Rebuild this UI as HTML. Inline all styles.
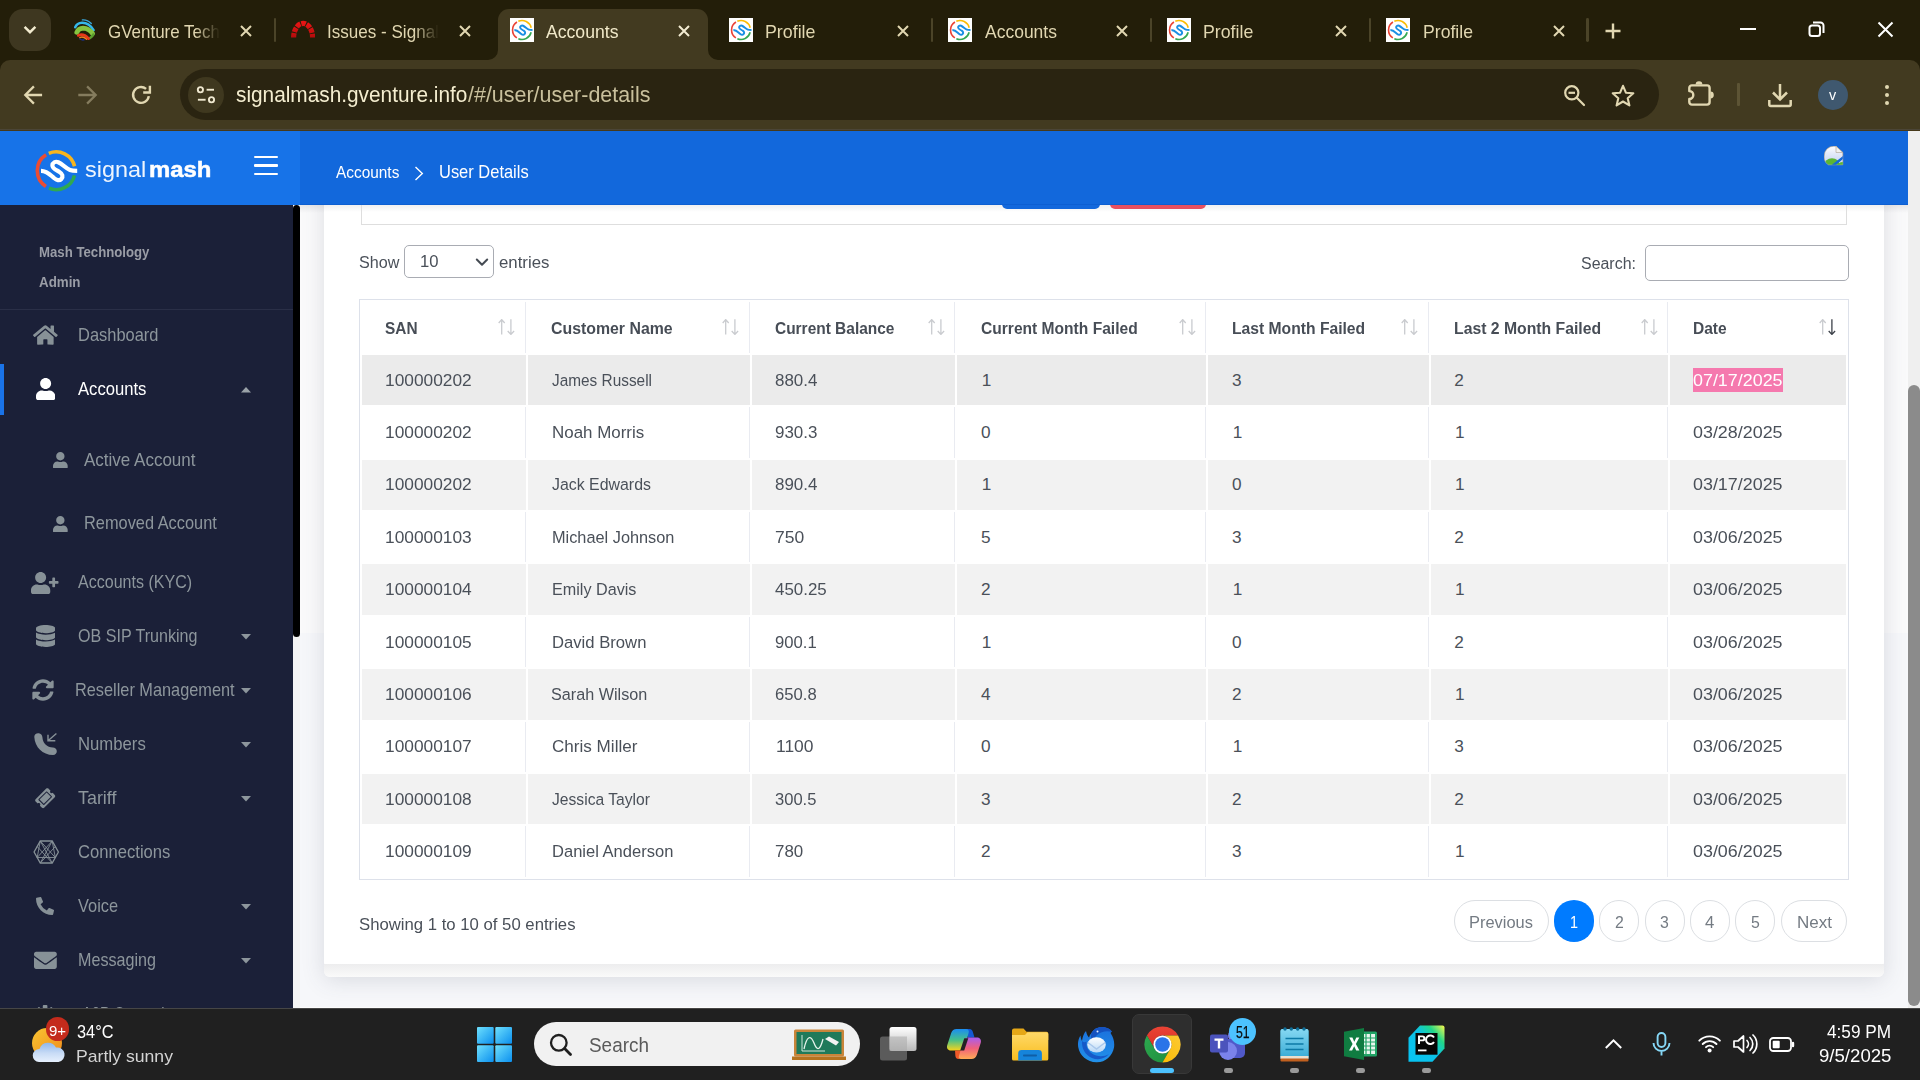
<!DOCTYPE html>
<html><head><meta charset="utf-8"><title>Accounts</title>
<style>
html,body{margin:0;padding:0;background:#fff;}
#s{position:relative;width:1920px;height:1080px;overflow:hidden;font-family:"Liberation Sans",sans-serif;}
.r{position:absolute;display:block;}
.t{position:absolute;white-space:nowrap;line-height:1;transform-origin:0 50%;}
</style></head>
<body><div id="s">
<div class="r" style="left:300px;top:205px;width:1608px;height:428px;background:#fafafb;"></div>
<div class="r" style="left:300px;top:633px;width:1608px;height:375px;background:#f6f7fa;"></div>
<div class="r" style="left:293px;top:1007px;width:1627px;height:1px;background:#fdfdfd;"></div>
<div class="r" style="left:300px;top:205px;width:1608px;height:8px;background:linear-gradient(180deg,rgba(60,60,70,.10),rgba(60,60,70,0));"></div>
<div class="r" style="left:324px;top:150px;width:1560px;height:827px;background:#fafafb;border-radius:0 0 6px 6px;box-shadow:0 3px 22px rgba(70,75,95,.17);"></div>
<div class="r" style="left:324px;top:964px;width:1560px;height:13px;background:linear-gradient(180deg,#ededee,#fafafa);border-radius:0 0 6px 6px;"></div>
<div class="r" style="left:324px;top:205px;width:1560px;height:759px;background:#fff;border-radius:0 0 2px 2px;"></div>
<div class="r" style="left:324px;top:205px;width:1560px;height:7px;background:linear-gradient(180deg,rgba(60,60,70,.08),rgba(60,60,70,0));"></div>
<div class="r" style="left:361px;top:190px;width:1484px;height:33.500px;border:1px solid #dedede;border-top:0;"></div>
<div class="r" style="left:1002px;top:200px;width:98px;height:9px;background:#1368dc;border-radius:0 0 5px 5px;"></div>
<div class="r" style="left:1110px;top:200px;width:96px;height:9px;background:#e8505f;border-radius:0 0 5px 5px;"></div>
<span class="t" style="left:359.00px;top:253.90px;font-size:17.3px;color:#4a5059;transform:scaleX(0.9345);">Show</span>
<div class="r" style="left:404px;top:245px;width:88px;height:30.500px;border:1px solid #a9acb3;border-radius:5px;background:#fff;"></div>
<span class="t" style="left:420.00px;top:253.40px;font-size:17.3px;color:#4a5059;transform:scaleX(0.9634);">10</span>
<svg class="r" style="left:474.5px;top:257.5px;" width="14" height="9" viewBox="0 0 14 9"><path d="M1.800 1.500 L7 6.800 L12.200 1.500" stroke="#454b53" stroke-width="2" fill="none" stroke-linecap="round" stroke-linejoin="round"/></svg>
<span class="t" style="left:498.75px;top:253.90px;font-size:17.3px;color:#4a5059;transform:scaleX(0.9730);">entries</span>
<span class="t" style="left:1581.25px;top:254.65px;font-size:17.3px;color:#4a5059;transform:scaleX(0.9228);">Search:</span>
<div class="r" style="left:1645px;top:245px;width:202px;height:34px;border:1px solid #a9acb3;border-radius:5px;background:#fff;"></div>
<div class="r" style="left:359px;top:299px;width:1487.500px;height:579px;border:1px solid #dde1ea;"></div>
<span class="t" style="left:385.00px;top:320.48px;font-size:17.2px;color:#474d56;font-weight:700;transform:scaleX(0.8955);">SAN</span>
<svg class="r" style="left:498.05px;top:319.2px;" width="17" height="16" viewBox="0 0 17 16"><g fill="none" stroke-width="1.300"><path d="M3.700 15.600 V0.600 M0.700 4 L3.700 0.600 L6.700 4" stroke="#c9cbcf"/><path d="M12.900 0.200 V15.300 M9.700 12 L12.900 15.400 L16.100 12" stroke="#c9cbcf"/></g></svg>
<span class="t" style="left:551.25px;top:320.48px;font-size:17.2px;color:#474d56;font-weight:700;transform:scaleX(0.9229);">Customer Name</span>
<svg class="r" style="left:721.8px;top:319.2px;" width="17" height="16" viewBox="0 0 17 16"><g fill="none" stroke-width="1.300"><path d="M3.700 15.600 V0.600 M0.700 4 L3.700 0.600 L6.700 4" stroke="#c9cbcf"/><path d="M12.900 0.200 V15.300 M9.700 12 L12.900 15.400 L16.100 12" stroke="#c9cbcf"/></g></svg>
<span class="t" style="left:775.00px;top:320.48px;font-size:17.2px;color:#474d56;font-weight:700;transform:scaleX(0.8994);">Current Balance</span>
<svg class="r" style="left:927.55px;top:319.2px;" width="17" height="16" viewBox="0 0 17 16"><g fill="none" stroke-width="1.300"><path d="M3.700 15.600 V0.600 M0.700 4 L3.700 0.600 L6.700 4" stroke="#c9cbcf"/><path d="M12.900 0.200 V15.300 M9.700 12 L12.900 15.400 L16.100 12" stroke="#c9cbcf"/></g></svg>
<span class="t" style="left:980.75px;top:320.48px;font-size:17.2px;color:#474d56;font-weight:700;transform:scaleX(0.9064);">Current Month Failed</span>
<svg class="r" style="left:1178.8px;top:319.2px;" width="17" height="16" viewBox="0 0 17 16"><g fill="none" stroke-width="1.300"><path d="M3.700 15.600 V0.600 M0.700 4 L3.700 0.600 L6.700 4" stroke="#c9cbcf"/><path d="M12.900 0.200 V15.300 M9.700 12 L12.900 15.400 L16.100 12" stroke="#c9cbcf"/></g></svg>
<span class="t" style="left:1231.75px;top:320.48px;font-size:17.2px;color:#474d56;font-weight:700;transform:scaleX(0.9114);">Last Month Failed</span>
<svg class="r" style="left:1401.3px;top:319.2px;" width="17" height="16" viewBox="0 0 17 16"><g fill="none" stroke-width="1.300"><path d="M3.700 15.600 V0.600 M0.700 4 L3.700 0.600 L6.700 4" stroke="#c9cbcf"/><path d="M12.900 0.200 V15.300 M9.700 12 L12.900 15.400 L16.100 12" stroke="#c9cbcf"/></g></svg>
<span class="t" style="left:1454.00px;top:320.48px;font-size:17.2px;color:#474d56;font-weight:700;transform:scaleX(0.9171);">Last 2 Month Failed</span>
<svg class="r" style="left:1640.55px;top:319.2px;" width="17" height="16" viewBox="0 0 17 16"><g fill="none" stroke-width="1.300"><path d="M3.700 15.600 V0.600 M0.700 4 L3.700 0.600 L6.700 4" stroke="#c9cbcf"/><path d="M12.900 0.200 V15.300 M9.700 12 L12.900 15.400 L16.100 12" stroke="#c9cbcf"/></g></svg>
<span class="t" style="left:1693.25px;top:320.48px;font-size:17.2px;color:#474d56;font-weight:700;transform:scaleX(0.9042);">Date</span>
<svg class="r" style="left:1819.3px;top:319.2px;" width="17" height="16" viewBox="0 0 17 16"><g fill="none" stroke-width="1.300"><path d="M3.700 15.600 V0.600 M0.700 4 L3.700 0.600 L6.700 4" stroke="#c9cbcf"/><path d="M12.900 0.200 V15.300 M9.700 12 L12.900 15.400 L16.100 12" stroke="#3d4149"/></g></svg>
<div class="r" style="left:525px;top:302px;width:1px;height:51px;background:#e9ebf1;"></div>
<div class="r" style="left:749px;top:302px;width:1px;height:51px;background:#e9ebf1;"></div>
<div class="r" style="left:954px;top:302px;width:1px;height:51px;background:#e9ebf1;"></div>
<div class="r" style="left:1205px;top:302px;width:1px;height:51px;background:#e9ebf1;"></div>
<div class="r" style="left:1428px;top:302px;width:1px;height:51px;background:#e9ebf1;"></div>
<div class="r" style="left:1667px;top:302px;width:1px;height:51px;background:#e9ebf1;"></div>
<div class="r" style="left:362px;top:355px;width:164px;height:50px;background:#ebebeb;"></div>
<div class="r" style="left:528px;top:355px;width:222px;height:50px;background:#ebebeb;"></div>
<div class="r" style="left:752px;top:355px;width:203px;height:50px;background:#ebebeb;"></div>
<div class="r" style="left:957px;top:355px;width:249px;height:50px;background:#ebebeb;"></div>
<div class="r" style="left:1208px;top:355px;width:221px;height:50px;background:#ebebeb;"></div>
<div class="r" style="left:1431px;top:355px;width:237px;height:50px;background:#ebebeb;"></div>
<div class="r" style="left:1670px;top:355px;width:176px;height:50px;background:#ebebeb;"></div>
<span class="t" style="left:385.00px;top:371.58px;font-size:17.2px;color:#4a5059;transform:scaleX(1.0077);">100000202</span>
<span class="t" style="left:551.50px;top:371.58px;font-size:17.2px;color:#4a5059;transform:scaleX(0.8945);">James Russell</span>
<span class="t" style="left:774.50px;top:371.58px;font-size:17.2px;color:#4a5059;transform:scaleX(0.9864);">880.4</span>
<span class="t" style="left:981.75px;top:371.58px;font-size:17.2px;color:#4a5059;">1</span>
<span class="t" style="left:1231.95px;top:371.58px;font-size:17.2px;color:#4a5059;">3</span>
<span class="t" style="left:1454.20px;top:371.58px;font-size:17.2px;color:#4a5059;">2</span>
<div class="r" style="left:1692.75px;top:368px;width:90.5px;height:24px;background:#f579ae;"></div>
<span class="t" style="left:1693.00px;top:371.58px;font-size:17.2px;color:#fff;transform:scaleX(1.0408);">07/17/2025</span>
<div class="r" style="left:525px;top:407px;width:1px;height:51px;background:#e9ebf1;"></div>
<div class="r" style="left:749px;top:407px;width:1px;height:51px;background:#e9ebf1;"></div>
<div class="r" style="left:954px;top:407px;width:1px;height:51px;background:#e9ebf1;"></div>
<div class="r" style="left:1205px;top:407px;width:1px;height:51px;background:#e9ebf1;"></div>
<div class="r" style="left:1428px;top:407px;width:1px;height:51px;background:#e9ebf1;"></div>
<div class="r" style="left:1667px;top:407px;width:1px;height:51px;background:#e9ebf1;"></div>
<span class="t" style="left:385.00px;top:423.98px;font-size:17.2px;color:#4a5059;transform:scaleX(1.0077);">100000202</span>
<span class="t" style="left:551.50px;top:423.98px;font-size:17.2px;color:#4a5059;transform:scaleX(0.9850);">Noah Morris</span>
<span class="t" style="left:774.50px;top:423.98px;font-size:17.2px;color:#4a5059;transform:scaleX(0.9864);">930.3</span>
<span class="t" style="left:980.95px;top:423.98px;font-size:17.2px;color:#4a5059;">0</span>
<span class="t" style="left:1232.75px;top:423.98px;font-size:17.2px;color:#4a5059;">1</span>
<span class="t" style="left:1455.00px;top:423.98px;font-size:17.2px;color:#4a5059;">1</span>
<span class="t" style="left:1693.00px;top:423.98px;font-size:17.2px;color:#4a5059;transform:scaleX(1.0408);">03/28/2025</span>
<div class="r" style="left:362px;top:460px;width:164px;height:50px;background:#f2f2f2;"></div>
<div class="r" style="left:528px;top:460px;width:222px;height:50px;background:#f2f2f2;"></div>
<div class="r" style="left:752px;top:460px;width:203px;height:50px;background:#f2f2f2;"></div>
<div class="r" style="left:957px;top:460px;width:249px;height:50px;background:#f2f2f2;"></div>
<div class="r" style="left:1208px;top:460px;width:221px;height:50px;background:#f2f2f2;"></div>
<div class="r" style="left:1431px;top:460px;width:237px;height:50px;background:#f2f2f2;"></div>
<div class="r" style="left:1670px;top:460px;width:176px;height:50px;background:#f2f2f2;"></div>
<span class="t" style="left:385.00px;top:476.38px;font-size:17.2px;color:#4a5059;transform:scaleX(1.0077);">100000202</span>
<span class="t" style="left:551.50px;top:476.38px;font-size:17.2px;color:#4a5059;transform:scaleX(0.9246);">Jack Edwards</span>
<span class="t" style="left:774.50px;top:476.38px;font-size:17.2px;color:#4a5059;transform:scaleX(0.9864);">890.4</span>
<span class="t" style="left:981.75px;top:476.38px;font-size:17.2px;color:#4a5059;">1</span>
<span class="t" style="left:1231.95px;top:476.38px;font-size:17.2px;color:#4a5059;">0</span>
<span class="t" style="left:1455.00px;top:476.38px;font-size:17.2px;color:#4a5059;">1</span>
<span class="t" style="left:1693.00px;top:476.38px;font-size:17.2px;color:#4a5059;transform:scaleX(1.0408);">03/17/2025</span>
<div class="r" style="left:525px;top:512px;width:1px;height:50px;background:#e9ebf1;"></div>
<div class="r" style="left:749px;top:512px;width:1px;height:50px;background:#e9ebf1;"></div>
<div class="r" style="left:954px;top:512px;width:1px;height:50px;background:#e9ebf1;"></div>
<div class="r" style="left:1205px;top:512px;width:1px;height:50px;background:#e9ebf1;"></div>
<div class="r" style="left:1428px;top:512px;width:1px;height:50px;background:#e9ebf1;"></div>
<div class="r" style="left:1667px;top:512px;width:1px;height:50px;background:#e9ebf1;"></div>
<span class="t" style="left:385.00px;top:528.78px;font-size:17.2px;color:#4a5059;transform:scaleX(1.0077);">100000103</span>
<span class="t" style="left:551.50px;top:528.78px;font-size:17.2px;color:#4a5059;transform:scaleX(0.9490);">Michael Johnson</span>
<span class="t" style="left:774.50px;top:528.78px;font-size:17.2px;color:#4a5059;transform:scaleX(1.0183);">750</span>
<span class="t" style="left:980.95px;top:528.78px;font-size:17.2px;color:#4a5059;">5</span>
<span class="t" style="left:1231.95px;top:528.78px;font-size:17.2px;color:#4a5059;">3</span>
<span class="t" style="left:1454.20px;top:528.78px;font-size:17.2px;color:#4a5059;">2</span>
<span class="t" style="left:1693.00px;top:528.78px;font-size:17.2px;color:#4a5059;transform:scaleX(1.0408);">03/06/2025</span>
<div class="r" style="left:362px;top:564px;width:164px;height:51px;background:#f2f2f2;"></div>
<div class="r" style="left:528px;top:564px;width:222px;height:51px;background:#f2f2f2;"></div>
<div class="r" style="left:752px;top:564px;width:203px;height:51px;background:#f2f2f2;"></div>
<div class="r" style="left:957px;top:564px;width:249px;height:51px;background:#f2f2f2;"></div>
<div class="r" style="left:1208px;top:564px;width:221px;height:51px;background:#f2f2f2;"></div>
<div class="r" style="left:1431px;top:564px;width:237px;height:51px;background:#f2f2f2;"></div>
<div class="r" style="left:1670px;top:564px;width:176px;height:51px;background:#f2f2f2;"></div>
<span class="t" style="left:385.00px;top:581.18px;font-size:17.2px;color:#4a5059;transform:scaleX(1.0077);">100000104</span>
<span class="t" style="left:551.50px;top:581.18px;font-size:17.2px;color:#4a5059;transform:scaleX(0.9402);">Emily Davis</span>
<span class="t" style="left:774.50px;top:581.18px;font-size:17.2px;color:#4a5059;transform:scaleX(0.9832);">450.25</span>
<span class="t" style="left:980.95px;top:581.18px;font-size:17.2px;color:#4a5059;">2</span>
<span class="t" style="left:1232.75px;top:581.18px;font-size:17.2px;color:#4a5059;">1</span>
<span class="t" style="left:1455.00px;top:581.18px;font-size:17.2px;color:#4a5059;">1</span>
<span class="t" style="left:1693.00px;top:581.18px;font-size:17.2px;color:#4a5059;transform:scaleX(1.0408);">03/06/2025</span>
<div class="r" style="left:525px;top:617px;width:1px;height:50px;background:#e9ebf1;"></div>
<div class="r" style="left:749px;top:617px;width:1px;height:50px;background:#e9ebf1;"></div>
<div class="r" style="left:954px;top:617px;width:1px;height:50px;background:#e9ebf1;"></div>
<div class="r" style="left:1205px;top:617px;width:1px;height:50px;background:#e9ebf1;"></div>
<div class="r" style="left:1428px;top:617px;width:1px;height:50px;background:#e9ebf1;"></div>
<div class="r" style="left:1667px;top:617px;width:1px;height:50px;background:#e9ebf1;"></div>
<span class="t" style="left:385.00px;top:633.58px;font-size:17.2px;color:#4a5059;transform:scaleX(1.0077);">100000105</span>
<span class="t" style="left:551.75px;top:633.58px;font-size:17.2px;color:#4a5059;transform:scaleX(0.9690);">David Brown</span>
<span class="t" style="left:775.00px;top:633.58px;font-size:17.2px;color:#4a5059;transform:scaleX(0.9690);">900.1</span>
<span class="t" style="left:981.75px;top:633.58px;font-size:17.2px;color:#4a5059;">1</span>
<span class="t" style="left:1231.95px;top:633.58px;font-size:17.2px;color:#4a5059;">0</span>
<span class="t" style="left:1454.20px;top:633.58px;font-size:17.2px;color:#4a5059;">2</span>
<span class="t" style="left:1693.00px;top:633.58px;font-size:17.2px;color:#4a5059;transform:scaleX(1.0408);">03/06/2025</span>
<div class="r" style="left:362px;top:669px;width:164px;height:51px;background:#f2f2f2;"></div>
<div class="r" style="left:528px;top:669px;width:222px;height:51px;background:#f2f2f2;"></div>
<div class="r" style="left:752px;top:669px;width:203px;height:51px;background:#f2f2f2;"></div>
<div class="r" style="left:957px;top:669px;width:249px;height:51px;background:#f2f2f2;"></div>
<div class="r" style="left:1208px;top:669px;width:221px;height:51px;background:#f2f2f2;"></div>
<div class="r" style="left:1431px;top:669px;width:237px;height:51px;background:#f2f2f2;"></div>
<div class="r" style="left:1670px;top:669px;width:176px;height:51px;background:#f2f2f2;"></div>
<span class="t" style="left:385.00px;top:685.98px;font-size:17.2px;color:#4a5059;transform:scaleX(1.0077);">100000106</span>
<span class="t" style="left:551.25px;top:685.98px;font-size:17.2px;color:#4a5059;transform:scaleX(0.9413);">Sarah Wilson</span>
<span class="t" style="left:775.00px;top:685.98px;font-size:17.2px;color:#4a5059;transform:scaleX(0.9690);">650.8</span>
<span class="t" style="left:980.95px;top:685.98px;font-size:17.2px;color:#4a5059;">4</span>
<span class="t" style="left:1231.95px;top:685.98px;font-size:17.2px;color:#4a5059;">2</span>
<span class="t" style="left:1455.00px;top:685.98px;font-size:17.2px;color:#4a5059;">1</span>
<span class="t" style="left:1693.00px;top:685.98px;font-size:17.2px;color:#4a5059;transform:scaleX(1.0408);">03/06/2025</span>
<div class="r" style="left:525px;top:722px;width:1px;height:50px;background:#e9ebf1;"></div>
<div class="r" style="left:749px;top:722px;width:1px;height:50px;background:#e9ebf1;"></div>
<div class="r" style="left:954px;top:722px;width:1px;height:50px;background:#e9ebf1;"></div>
<div class="r" style="left:1205px;top:722px;width:1px;height:50px;background:#e9ebf1;"></div>
<div class="r" style="left:1428px;top:722px;width:1px;height:50px;background:#e9ebf1;"></div>
<div class="r" style="left:1667px;top:722px;width:1px;height:50px;background:#e9ebf1;"></div>
<span class="t" style="left:385.00px;top:738.38px;font-size:17.2px;color:#4a5059;transform:scaleX(1.0077);">100000107</span>
<span class="t" style="left:551.50px;top:738.38px;font-size:17.2px;color:#4a5059;transform:scaleX(0.9942);">Chris Miller</span>
<span class="t" style="left:775.75px;top:738.38px;font-size:17.2px;color:#4a5059;transform:scaleX(1.0141);">1100</span>
<span class="t" style="left:980.95px;top:738.38px;font-size:17.2px;color:#4a5059;">0</span>
<span class="t" style="left:1232.75px;top:738.38px;font-size:17.2px;color:#4a5059;">1</span>
<span class="t" style="left:1454.20px;top:738.38px;font-size:17.2px;color:#4a5059;">3</span>
<span class="t" style="left:1693.00px;top:738.38px;font-size:17.2px;color:#4a5059;transform:scaleX(1.0408);">03/06/2025</span>
<div class="r" style="left:362px;top:774px;width:164px;height:50px;background:#f2f2f2;"></div>
<div class="r" style="left:528px;top:774px;width:222px;height:50px;background:#f2f2f2;"></div>
<div class="r" style="left:752px;top:774px;width:203px;height:50px;background:#f2f2f2;"></div>
<div class="r" style="left:957px;top:774px;width:249px;height:50px;background:#f2f2f2;"></div>
<div class="r" style="left:1208px;top:774px;width:221px;height:50px;background:#f2f2f2;"></div>
<div class="r" style="left:1431px;top:774px;width:237px;height:50px;background:#f2f2f2;"></div>
<div class="r" style="left:1670px;top:774px;width:176px;height:50px;background:#f2f2f2;"></div>
<span class="t" style="left:385.00px;top:790.78px;font-size:17.2px;color:#4a5059;transform:scaleX(1.0077);">100000108</span>
<span class="t" style="left:552.00px;top:790.78px;font-size:17.2px;color:#4a5059;transform:scaleX(0.9102);">Jessica Taylor</span>
<span class="t" style="left:775.00px;top:790.78px;font-size:17.2px;color:#4a5059;transform:scaleX(0.9632);">300.5</span>
<span class="t" style="left:980.95px;top:790.78px;font-size:17.2px;color:#4a5059;">3</span>
<span class="t" style="left:1231.95px;top:790.78px;font-size:17.2px;color:#4a5059;">2</span>
<span class="t" style="left:1454.20px;top:790.78px;font-size:17.2px;color:#4a5059;">2</span>
<span class="t" style="left:1693.00px;top:790.78px;font-size:17.2px;color:#4a5059;transform:scaleX(1.0408);">03/06/2025</span>
<div class="r" style="left:525px;top:826px;width:1px;height:51px;background:#e9ebf1;"></div>
<div class="r" style="left:749px;top:826px;width:1px;height:51px;background:#e9ebf1;"></div>
<div class="r" style="left:954px;top:826px;width:1px;height:51px;background:#e9ebf1;"></div>
<div class="r" style="left:1205px;top:826px;width:1px;height:51px;background:#e9ebf1;"></div>
<div class="r" style="left:1428px;top:826px;width:1px;height:51px;background:#e9ebf1;"></div>
<div class="r" style="left:1667px;top:826px;width:1px;height:51px;background:#e9ebf1;"></div>
<span class="t" style="left:385.00px;top:843.18px;font-size:17.2px;color:#4a5059;transform:scaleX(1.0077);">100000109</span>
<span class="t" style="left:551.75px;top:843.18px;font-size:17.2px;color:#4a5059;transform:scaleX(0.9624);">Daniel Anderson</span>
<span class="t" style="left:775.00px;top:843.18px;font-size:17.2px;color:#4a5059;transform:scaleX(0.9835);">780</span>
<span class="t" style="left:980.95px;top:843.18px;font-size:17.2px;color:#4a5059;">2</span>
<span class="t" style="left:1231.95px;top:843.18px;font-size:17.2px;color:#4a5059;">3</span>
<span class="t" style="left:1455.00px;top:843.18px;font-size:17.2px;color:#4a5059;">1</span>
<span class="t" style="left:1693.00px;top:843.18px;font-size:17.2px;color:#4a5059;transform:scaleX(1.0408);">03/06/2025</span>
<span class="t" style="left:359.30px;top:916.10px;font-size:17.3px;color:#4a5059;transform:scaleX(0.9673);">Showing 1 to 10 of 50 entries</span>
<div class="r" style="left:1454px;top:900px;width:92.5px;height:40px;border-radius:21px;border:1px solid #dcdfe3;background:#fff;"></div>
<span class="t" style="left:1469.30px;top:913.78px;font-size:17.2px;color:#747b83;transform:scaleX(0.9565);">Previous</span>
<div class="r" style="left:1554px;top:900px;width:40px;height:42px;border-radius:21px;background:#007bff;"></div>
<span class="t" style="left:1570.00px;top:913.78px;font-size:17.2px;color:#fff;transform:scaleX(0.8380);">1</span>
<div class="r" style="left:1599.3px;top:900px;width:38px;height:40px;border-radius:21px;border:1px solid #dcdfe3;background:#fff;"></div>
<span class="t" style="left:1614.80px;top:913.78px;font-size:17.2px;color:#747b83;transform:scaleX(0.9219);">2</span>
<div class="r" style="left:1644.5px;top:900px;width:38px;height:40px;border-radius:21px;border:1px solid #dcdfe3;background:#fff;"></div>
<span class="t" style="left:1660.00px;top:913.78px;font-size:17.2px;color:#747b83;transform:scaleX(0.9219);">3</span>
<div class="r" style="left:1689.8px;top:900px;width:38px;height:40px;border-radius:21px;border:1px solid #dcdfe3;background:#fff;"></div>
<span class="t" style="left:1705.00px;top:913.78px;font-size:17.2px;color:#747b83;transform:scaleX(0.9742);">4</span>
<div class="r" style="left:1735px;top:900px;width:38px;height:40px;border-radius:21px;border:1px solid #dcdfe3;background:#fff;"></div>
<span class="t" style="left:1750.50px;top:913.78px;font-size:17.2px;color:#747b83;transform:scaleX(0.9219);">5</span>
<div class="r" style="left:1780.5px;top:900px;width:64.3px;height:40px;border-radius:21px;border:1px solid #dcdfe3;background:#fff;"></div>
<span class="t" style="left:1796.60px;top:913.78px;font-size:17.2px;color:#747b83;transform:scaleX(0.9902);">Next</span>
<div class="r" style="left:1908px;top:131px;width:12px;height:877px;background:#efefef;"></div>
<div class="r" style="left:1908px;top:385px;width:12px;height:621px;background:#8b8b8b;border-radius:6px;"></div>
<div class="r" style="left:0px;top:131px;width:300px;height:74px;background:#1773e8;"></div>
<div class="r" style="left:300px;top:131px;width:1608px;height:74px;background:#1268dc;"></div>
<div class="r" style="left:300px;top:204px;width:1608px;height:1px;background:#0d5fd2;"></div>
<svg class="r" style="left:28px;top:140px;" width="60" height="60" viewBox="0 0 60 60"><g fill="none" stroke-width="3.600"><path d="M18.050 14.760 A18.900 18.900 0 0 0 17.910 46.550" stroke="#ea4c33"/><path d="M20.820 13.300 A18.900 18.900 0 0 1 46.570 26.260" stroke="#f8b51d"/><path d="M46.520 35.340 A18.900 18.900 0 0 1 20.910 48.140" stroke="#2fa951"/><path d="M13 30.800 C19 30.800 22.500 35 26 38 C28.500 40.200 31.500 41 33.300 39 C35.500 36.500 34.500 33.800 31.500 32 C28 29.800 24.200 28.500 24.400 25.500 C24.600 22.500 27.500 21 30.300 22.200 C34.500 24 38 28.500 42 30 C44 30.800 46 30.800 49.200 30.800" stroke="#fff" stroke-width="4.200"/></g></svg>
<span class="t" style="left:85.00px;top:158.83px;font-size:22.3px;color:#fff;transform:scaleX(1.0512);opacity:.93;">signal</span>
<span class="t" style="left:148.90px;top:158.83px;font-size:22.3px;color:#fff;font-weight:700;transform:scaleX(1.0721);-webkit-text-stroke:0.500px #fff;">mash</span>
<div class="r" style="left:254px;top:155.5px;width:23.5px;height:2.6px;background:#fff;border-radius:1px;"></div>
<div class="r" style="left:254px;top:164px;width:23.5px;height:2.6px;background:#fff;border-radius:1px;"></div>
<div class="r" style="left:254px;top:172.5px;width:23.5px;height:2.6px;background:#fff;border-radius:1px;"></div>
<span class="t" style="left:336.30px;top:165.29px;font-size:15.6px;color:#fff;transform:scaleX(0.9876);">Accounts</span>
<svg class="r" style="left:414px;top:166px;" width="10" height="15" viewBox="0 0 10 15"><path d="M1.500 1 L8.300 7.500 L1.500 14" stroke="#fff" stroke-width="1.400" fill="none"/></svg>
<span class="t" style="left:439.00px;top:163.17px;font-size:18.2px;color:#fff;transform:scaleX(0.9052);">User Details</span>
<svg class="r" style="left:1824px;top:146px;" width="19.5" height="19.5" viewBox="0 0 19.5 19.5"><defs><linearGradient id="bi" x1="0" y1="0" x2="0" y2="1"><stop offset="0" stop-color="#ffffff"/><stop offset=".35" stop-color="#e6ecfa"/><stop offset="1" stop-color="#c3d2f0"/></linearGradient><clipPath id="bic"><path d="M0.300 9.500 A9.300 9.300 0 0 1 9.600 0.200 H12 L18.800 6.500 V18.800 H4.500 A9.300 9.300 0 0 1 0.300 9.500 Z"/></clipPath></defs><path d="M0.300 9.500 A9.300 9.300 0 0 1 9.600 0.200 H12 L18.800 6.500 V18.800 H4.500 A9.300 9.300 0 0 1 0.300 9.500 Z" fill="url(#bi)" stroke="#c9ac86" stroke-width=".6"/><g clip-path="url(#bic)"><ellipse cx="8" cy="19.500" rx="7.800" ry="7.300" fill="#5cb534"/><ellipse cx="19" cy="21" rx="6" ry="5" fill="#5cb534"/><path d="M7 19.500 L19.500 9.600 V12.600 L11.300 19.500 Z" fill="#1268dc"/></g><path d="M12 0.200 V6.500 H18.800 Z" fill="#f1f1ef" stroke="#b5ab9c" stroke-width=".7"/></svg>
<div class="r" style="left:0px;top:205px;width:293px;height:803px;background:#1b2038;"></div>
<div class="r" style="left:293px;top:205px;width:7px;height:803px;background:#f4f4f4;"></div>
<div class="r" style="left:293px;top:205px;width:7px;height:432px;background:#000;border-radius:4px;"></div>
<span class="t" style="left:38.90px;top:245.39px;font-size:14px;color:#9a9da6;font-weight:700;transform:scaleX(0.9421);">Mash Technology</span>
<span class="t" style="left:38.90px;top:275.29px;font-size:14px;color:#9a9da6;font-weight:700;transform:scaleX(0.9531);">Admin</span>
<div class="r" style="left:0px;top:309px;width:293px;height:1px;background:#2a2f47;"></div>
<svg class="r" style="left:32.80px;top:323.50px;" width="24.75" height="22.00" viewBox="0 0 576 512"><path fill="#879197" d="M280.370 148.260L96 300.110V464a16 16 0 0 0 16 16l112.060-.290a16 16 0 0 0 15.920-16V368a16 16 0 0 1 16-16h64a16 16 0 0 1 16 16v95.640a16 16 0 0 0 16 16.050L464 480a16 16 0 0 0 16-16V300L295.670 148.260a12.190 12.190 0 0 0-15.300 0zM571.600 251.470L488 182.560V44.050a12 12 0 0 0-12-12h-56a12 12 0 0 0-12 12v72.610L318.470 43a48 48 0 0 0-61 0L4.340 251.470a12 12 0 0 0-1.600 16.900l25.500 31A12 12 0 0 0 45.150 301l235.220-193.740a12.190 12.190 0 0 1 15.300 0L530.900 301a12 12 0 0 0 16.900-1.600l25.500-31a12 12 0 0 0-1.700-16.930z"/></svg>
<span class="t" style="left:78.20px;top:326.89px;font-size:17.8px;color:#8d969c;transform:scaleX(0.9248);">Dashboard</span>
<div class="r" style="left:0px;top:364px;width:4px;height:51px;background:#1a73e8;"></div>
<svg class="r" style="left:35.50px;top:377.60px;" width="19.25" height="22.00" viewBox="0 0 448 512"><path fill="#fff" d="M224 256c70.700 0 128-57.300 128-128S294.700 0 224 0 96 57.300 96 128s57.300 128 128 128zm89.600 32h-16.700c-22.200 10.200-46.900 16-72.900 16s-50.600-5.800-72.900-16h-16.700C60.200 288 0 348.200 0 422.400V464c0 26.500 21.500 48 48 48h352c26.500 0 48-21.500 48-48v-41.600c0-74.200-60.200-134.400-134.400-134.400z"/></svg>
<span class="t" style="left:78.20px;top:380.89px;font-size:17.8px;color:#fff;transform:scaleX(0.9352);">Accounts</span>
<svg class="r" style="left:241px;top:387px;" width="10" height="5.5" viewBox="0 0 10 5.5"><path d="M0 5.500 L5 0 L10 5.500 Z" fill="#9aa2a8"/></svg>
<svg class="r" style="left:53.40px;top:451.60px;" width="14.70" height="16.80" viewBox="0 0 448 512"><path fill="#879197" d="M224 256c70.700 0 128-57.300 128-128S294.700 0 224 0 96 57.300 96 128s57.300 128 128 128zm89.600 32h-16.700c-22.200 10.200-46.900 16-72.900 16s-50.600-5.800-72.900-16h-16.700C60.200 288 0 348.200 0 422.400V464c0 26.500 21.500 48 48 48h352c26.500 0 48-21.500 48-48v-41.600c0-74.200-60.200-134.400-134.400-134.400z"/></svg>
<span class="t" style="left:84.00px;top:451.69px;font-size:17.8px;color:#8d969c;transform:scaleX(0.9557);">Active Account</span>
<svg class="r" style="left:53.40px;top:515.60px;" width="14.70" height="16.80" viewBox="0 0 448 512"><path fill="#879197" d="M224 256c70.700 0 128-57.300 128-128S294.700 0 224 0 96 57.300 96 128s57.300 128 128 128zm89.600 32h-16.700c-22.200 10.200-46.900 16-72.900 16s-50.600-5.800-72.900-16h-16.700C60.200 288 0 348.200 0 422.400V464c0 26.500 21.500 48 48 48h352c26.500 0 48-21.500 48-48v-41.600c0-74.200-60.200-134.400-134.400-134.400z"/></svg>
<span class="t" style="left:84.40px;top:514.79px;font-size:17.8px;color:#8d969c;transform:scaleX(0.9201);">Removed Account</span>
<svg class="r" style="left:31.30px;top:572.00px;" width="27.50" height="22.00" viewBox="0 0 640 512"><path fill="#879197" d="M624 208h-64v-64c0-8.800-7.200-16-16-16h-32c-8.800 0-16 7.200-16 16v64h-64c-8.800 0-16 7.200-16 16v32c0 8.800 7.200 16 16 16h64v64c0 8.800 7.200 16 16 16h32c8.800 0 16-7.200 16-16v-64h64c8.800 0 16-7.200 16-16v-32c0-8.800-7.200-16-16-16zm-400 48c70.700 0 128-57.300 128-128S294.700 0 224 0 96 57.300 96 128s57.300 128 128 128zm89.600 32h-16.700c-22.200 10.200-46.900 16-72.900 16s-50.600-5.800-72.900-16h-16.700C60.200 288 0 348.200 0 422.400V464c0 26.500 21.500 48 48 48h352c26.500 0 48-21.500 48-48v-41.600c0-74.200-60.200-134.400-134.400-134.400z"/></svg>
<span class="t" style="left:78.20px;top:573.69px;font-size:17.8px;color:#8d969c;transform:scaleX(0.9017);">Accounts (KYC)</span>
<svg class="r" style="left:35.70px;top:625.00px;" width="19.25" height="22.00" viewBox="0 0 448 512"><path fill="#879197" d="M448 73.143v45.714C448 159.143 347.667 192 224 192S0 159.143 0 118.857V73.143C0 32.857 100.333 0 224 0s224 32.857 224 73.143zM448 176v102.857C448 319.143 347.667 352 224 352S0 319.143 0 278.857V176c48.125 33.143 136.208 48.572 224 48.572S399.874 209.143 448 176zm0 160v102.857C448 479.143 347.667 512 224 512S0 479.143 0 438.857V336c48.125 33.143 136.208 48.572 224 48.572S399.874 369.143 448 336z"/></svg>
<span class="t" style="left:78.20px;top:627.69px;font-size:17.8px;color:#8d969c;transform:scaleX(0.9043);">OB SIP Trunking</span>
<svg class="r" style="left:241px;top:634px;" width="10" height="5.5" viewBox="0 0 10 5.5"><path d="M0 0 L10 0 L5 5.500 Z" fill="#8d969c"/></svg>
<svg class="r" style="left:32.20px;top:678.60px;" width="22.00" height="22.00" viewBox="0 0 512 512"><path fill="#879197" d="M370.720 133.280C339.458 104.008 298.888 87.962 255.848 88c-77.458.068-144.328 53.178-162.791 126.850-1.344 5.363-6.122 9.150-11.651 9.150H24.103c-7.498 0-13.194-6.807-11.807-14.176C33.933 94.924 134.813 8 256 8c66.448 0 126.791 26.136 171.315 68.685L463.030 40.970C478.149 25.851 504 36.559 504 57.941V192c0 13.255-10.745 24-24 24H345.941c-21.382 0-32.090-25.851-16.971-40.971l41.750-41.749zM32 296h134.059c21.382 0 32.090 25.851 16.971 40.971l-41.750 41.750c31.262 29.273 71.835 45.319 114.876 45.280 77.418-.070 144.315-53.144 162.787-126.849 1.344-5.363 6.122-9.150 11.651-9.150h57.304c7.498 0 13.194 6.807 11.807 14.176C478.067 417.076 377.187 504 256 504c-66.448 0-126.791-26.136-171.315-68.685L48.970 471.030C33.851 486.149 8 475.441 8 454.059V320c0-13.255 10.745-24 24-24z"/></svg>
<span class="t" style="left:75.10px;top:681.79px;font-size:17.8px;color:#8d969c;transform:scaleX(0.9175);">Reseller Management</span>
<svg class="r" style="left:241px;top:688.3px;" width="10" height="5.5" viewBox="0 0 10 5.5"><path d="M0 0 L10 0 L5 5.500 Z" fill="#8d969c"/></svg>
<svg class="r" style="left:33px;top:732px;" width="25" height="24" viewBox="0 0 25 24"><path d="M1.300 5 C1.100 2.600 3.600 0.800 5.900 1.300 C7.900 1.700 9.200 3.200 9.400 5.200 C9.700 8.200 10.500 10.600 12.500 12.600 C14.500 14.600 17 15.300 19.900 15.500 C22 15.600 23.600 16.900 23.800 19 C24 21.200 22.300 23 20 23 C9.600 23 1.900 15.200 1.300 5 Z" fill="#879197"/><path d="M23.400 1.500 L15.300 8.500 M15 2.800 V8.800 H22.300" stroke="#879197" stroke-width="1.400" fill="none"/></svg>
<span class="t" style="left:78.20px;top:735.79px;font-size:17.8px;color:#8d969c;transform:scaleX(0.9393);">Numbers</span>
<svg class="r" style="left:241px;top:742.3px;" width="10" height="5.5" viewBox="0 0 10 5.5"><path d="M0 0 L10 0 L5 5.500 Z" fill="#8d969c"/></svg>
<svg class="r" style="left:34.200px;top:787.300px" width="22.400" height="22.400" viewBox="-357 -357 714 714"><path fill="#879197" transform="rotate(-45) translate(-288 -256)" d="M128 160h320v192H128V160zm400 96c0 26.510 21.490 48 48 48v96c0 26.510-21.490 48-48 48H48c-26.510 0-48-21.490-48-48v-96c26.510 0 48-21.490 48-48s-21.490-48-48-48v-96c0-26.510 21.490-48 48-48h480c26.510 0 48 21.490 48 48v96c-26.510 0-48 21.490-48 48zm-48-104c0-13.255-10.745-24-24-24H120c-13.255 0-24 10.745-24 24v208c0 13.255 10.745 24 24 24h336c13.255 0 24-10.745 24-24V152z"/></svg>
<span class="t" style="left:78.20px;top:789.79px;font-size:17.8px;color:#8d969c;transform:scaleX(1.0060);">Tariff</span>
<svg class="r" style="left:241px;top:796.2px;" width="10" height="5.5" viewBox="0 0 10 5.5"><path d="M0 0 L10 0 L5 5.500 Z" fill="#8d969c"/></svg>
<svg class="r" style="left:32.5px;top:840px;" width="26.5" height="24" viewBox="0 0 26.5 24"><g stroke="#879197" stroke-width=".9" fill="none"><path d="M7.300 1 H19.200 L25.400 12 L19.200 23 H7.300 L1.100 12 Z" stroke-width="1.300"/><path d="M7.300 1 L19.200 23 M19.200 1 L7.300 23 M7.300 1 L22.300 17.500 M19.200 1 L4.200 17.500 M4.200 6.500 L19.200 23 M22.300 6.500 L7.300 23 M4.200 17.500 H22.300 M7.300 1 L4.200 17.500 M19.200 1 L22.300 17.500"/></g></svg>
<span class="t" style="left:78.20px;top:843.79px;font-size:17.8px;color:#8d969c;transform:scaleX(0.9346);">Connections</span>
<svg class="r" style="left:36.00px;top:896.80px;" width="18.00" height="18.00" viewBox="0 0 512 512"><path fill="#879197" d="M497.390 361.800l-112-48a24 24 0 0 0-28 6.900l-49.600 60.600A370.660 370.660 0 0 1 130.600 204.110l60.600-49.600a23.940 23.940 0 0 0 6.900-28l-48-112A24.160 24.160 0 0 0 122.600.610l-104 24A24 24 0 0 0 0 48c0 256.500 207.900 464 464 464a24 24 0 0 0 23.400-18.600l24-104a24.290 24.290 0 0 0-14.010-27.600z"/></svg>
<span class="t" style="left:78.20px;top:897.69px;font-size:17.8px;color:#8d969c;transform:scaleX(0.9214);">Voice</span>
<svg class="r" style="left:241px;top:904px;" width="10" height="5.5" viewBox="0 0 10 5.5"><path d="M0 0 L10 0 L5 5.500 Z" fill="#8d969c"/></svg>
<svg class="r" style="left:34.00px;top:949.30px;" width="22.80" height="22.80" viewBox="0 0 512 512"><path fill="#879197" d="M502.300 190.800c3.900-3.100 9.700-.200 9.700 4.700V400c0 26.500-21.500 48-48 48H48c-26.500 0-48-21.500-48-48V195.600c0-5 5.700-7.800 9.700-4.700 22.400 17.400 52.100 39.500 154.100 113.600 21.100 15.400 56.700 47.800 92.200 47.600 35.700.300 72-32.800 92.300-47.600 102-74.100 131.600-96.300 154-113.700zM256 320c23.200.400 56.600-29.200 73.400-41.400 132.700-96.300 142.800-104.700 173.400-128.700 5.800-4.500 9.200-11.500 9.200-18.900v-19c0-26.500-21.500-48-48-48H48C21.500 64 0 85.500 0 112v19c0 7.400 3.400 14.300 9.200 18.900 30.600 23.900 40.700 32.400 173.400 128.700 16.800 12.200 50.200 41.800 73.400 41.400z"/></svg>
<span class="t" style="left:78.20px;top:951.69px;font-size:17.8px;color:#8d969c;transform:scaleX(0.9063);">Messaging</span>
<svg class="r" style="left:241px;top:958.2px;" width="10" height="5.5" viewBox="0 0 10 5.5"><path d="M0 0 L10 0 L5 5.500 Z" fill="#8d969c"/></svg>
<span class="t" style="left:81.80px;top:1005.69px;font-size:17.8px;color:#8d969c;transform:scaleX(0.8306);">A2P Campaign</span>
<svg class="r" style="left:34px;top:1004.9px;" width="22.2" height="22.2" viewBox="0 0 22.2 22.2"><g transform="translate(11.100 11.100)" fill="#879197"><rect x="-2.300" y="-11" width="4.600" height="5" rx=".8" transform="rotate(0)"/><rect x="-2.300" y="-11" width="4.600" height="5" rx=".8" transform="rotate(45)"/><rect x="-2.300" y="-11" width="4.600" height="5" rx=".8" transform="rotate(90)"/><rect x="-2.300" y="-11" width="4.600" height="5" rx=".8" transform="rotate(135)"/><rect x="-2.300" y="-11" width="4.600" height="5" rx=".8" transform="rotate(180)"/><rect x="-2.300" y="-11" width="4.600" height="5" rx=".8" transform="rotate(225)"/><rect x="-2.300" y="-11" width="4.600" height="5" rx=".8" transform="rotate(270)"/><rect x="-2.300" y="-11" width="4.600" height="5" rx=".8" transform="rotate(315)"/><circle r="8.200"/></g><circle cx="11.100" cy="11.100" r="3.300" fill="#1b2038"/></svg>
<div class="r" style="left:0px;top:0px;width:1920px;height:76px;background:#231e09;"></div>
<div class="r" style="left:0px;top:60px;width:1920px;height:70px;background:#423a20;border-radius:10px 10px 0 0;"></div>
<div class="r" style="left:0px;top:129px;width:1920px;height:1px;background:#4b4537;"></div>
<div class="r" style="left:0px;top:130px;width:1920px;height:1px;background:#46391a;"></div>
<div class="r" style="left:9px;top:9px;width:41.6px;height:42px;background:#3e3720;border-radius:14px;"></div>
<svg class="r" style="left:22px;top:24px;" width="16" height="12" viewBox="0 0 16 12"><path d="M2.600 2.800 L8 8.200 L13.400 2.800" stroke="#f3ecd0" stroke-width="2.400" fill="none"/></svg>
<div class="r" style="left:498px;top:9px;width:210px;height:52px;background:#423a20;border-radius:11px 11px 0 0;"></div>
<svg class="r" style="left:488px;top:50px" width="10" height="10"><path d="M0 10 A10 10 0 0 0 10 0 V10 Z" fill="#423a20"/></svg>
<svg class="r" style="left:708px;top:50px" width="10" height="10"><path d="M10 10 A10 10 0 0 1 0 0 V10 Z" fill="#423a20"/></svg>
<svg class="r" style="left:73px;top:18px;" width="24" height="24" viewBox="0 0 24 24"><g fill="none" stroke-linecap="round"><path d="M9.400 1.900 Q14.500 1.500 18.300 5.600" stroke="#3aa5d8" stroke-width="1.400"/><path d="M2.200 9.300 Q4 5 9 4.800 Q16 4.600 20.600 12.200" stroke="#35b8ea" stroke-width="2.500"/><path d="M3.800 14.300 Q5.500 10.200 10 10.100 Q16 10.300 19.600 15.600" stroke="#86c440" stroke-width="4.800"/><path d="M20.300 16.500 Q19.300 18.800 17.200 19.800" stroke="#5a9e2e" stroke-width="2.600"/><path d="M5.300 17.400 Q10.500 15 15.600 20.600" stroke="#e8381a" stroke-width="2.800"/><path d="M6.800 19.600 Q10 18 13.600 21.300" stroke="#f47b20" stroke-width="1.500"/><path d="M6.800 21 Q9 22.300 11 21.800" stroke="#1d2f86" stroke-width="1.400"/></g></svg>
<span class="t" style="left:108.00px;top:24.11px;font-size:17.9px;color:#e1d7b1;transform:scaleX(0.9487);-webkit-mask-image:linear-gradient(90deg,#000 78%,transparent 100%);">GVenture Tech</span>
<svg class="r" style="left:240px;top:24.5px;" width="12" height="12" viewBox="0 0 12 12"><path d="M1 1 L11 11 M11 1 L1 11" stroke="#e1d7b1" stroke-width="2" fill="none"/></svg>
<div class="r" style="left:273.5px;top:18px;width:2.8px;height:23.5px;background:#4b4428;border-radius:1.400px;"></div>
<svg class="r" style="left:291px;top:18px;" width="24" height="24" viewBox="0 0 24 24"><defs><linearGradient id="rm" x1="0" y1="0" x2="0" y2="1"><stop offset="0" stop-color="#e61414"/><stop offset="1" stop-color="#b30c0c"/></linearGradient></defs><path d="M2.600 19.600 A9.500 14.200 0 0 1 21.600 19.600" fill="none" stroke="url(#rm)" stroke-width="5.200" stroke-dasharray="4.650 0.950"/></svg>
<span class="t" style="left:327.00px;top:24.11px;font-size:17.9px;color:#e1d7b1;transform:scaleX(0.9538);-webkit-mask-image:linear-gradient(90deg,#000 78%,transparent 100%);">Issues - Signal</span>
<svg class="r" style="left:459px;top:24.5px;" width="12" height="12" viewBox="0 0 12 12"><path d="M1 1 L11 11 M11 1 L1 11" stroke="#e1d7b1" stroke-width="2" fill="none"/></svg>
<svg class="r" style="left:510px;top:18px;" width="24" height="24" viewBox="0 0 24 24"><rect width="24" height="24" fill="#fff"/><g fill="none" transform="translate(-2.100 -3.350) scale(.5)" stroke-width="3.200"><path d="M18.050 14.760 A18.900 18.900 0 0 0 17.910 46.550" stroke="#ea4335"/><path d="M20.820 13.300 A18.900 18.900 0 0 1 46.570 26.260" stroke="#fbbc05"/><path d="M46.520 35.340 A18.900 18.900 0 0 1 20.910 48.140" stroke="#34a853"/><path d="M13 30.800 C19 30.800 22.500 35 26 38 C28.500 40.200 31.500 41 33.300 39 C35.500 36.500 34.500 33.800 31.500 32 C28 29.800 24.200 28.500 24.400 25.500 C24.600 22.500 27.500 21 30.300 22.200 C34.500 24 38 28.500 42 30 C44 30.800 46 30.800 49.200 30.800" stroke="#1a8fe3" stroke-width="4"/></g></svg>
<span class="t" style="left:546.00px;top:24.11px;font-size:17.9px;color:#f1e9c9;transform:scaleX(0.9843);">Accounts</span>
<svg class="r" style="left:677.5px;top:24.5px;" width="12" height="12" viewBox="0 0 12 12"><path d="M1 1 L11 11 M11 1 L1 11" stroke="#f3ecd2" stroke-width="2" fill="none"/></svg>
<svg class="r" style="left:729px;top:18px;" width="24" height="24" viewBox="0 0 24 24"><rect width="24" height="24" fill="#fff"/><g fill="none" transform="translate(-2.100 -3.350) scale(.5)" stroke-width="3.200"><path d="M18.050 14.760 A18.900 18.900 0 0 0 17.910 46.550" stroke="#ea4335"/><path d="M20.820 13.300 A18.900 18.900 0 0 1 46.570 26.260" stroke="#fbbc05"/><path d="M46.520 35.340 A18.900 18.900 0 0 1 20.910 48.140" stroke="#34a853"/><path d="M13 30.800 C19 30.800 22.500 35 26 38 C28.500 40.200 31.500 41 33.300 39 C35.500 36.500 34.500 33.800 31.500 32 C28 29.800 24.200 28.500 24.400 25.500 C24.600 22.500 27.500 21 30.300 22.200 C34.500 24 38 28.500 42 30 C44 30.800 46 30.800 49.200 30.800" stroke="#1a8fe3" stroke-width="4"/></g></svg>
<span class="t" style="left:765.00px;top:24.11px;font-size:17.9px;color:#e1d7b1;transform:scaleX(0.9951);">Profile</span>
<svg class="r" style="left:897px;top:24.5px;" width="12" height="12" viewBox="0 0 12 12"><path d="M1 1 L11 11 M11 1 L1 11" stroke="#e1d7b1" stroke-width="2" fill="none"/></svg>
<div class="r" style="left:930.5px;top:18px;width:2.8px;height:23.5px;background:#4b4428;border-radius:1.400px;"></div>
<svg class="r" style="left:948px;top:18px;" width="24" height="24" viewBox="0 0 24 24"><rect width="24" height="24" fill="#fff"/><g fill="none" transform="translate(-2.100 -3.350) scale(.5)" stroke-width="3.200"><path d="M18.050 14.760 A18.900 18.900 0 0 0 17.910 46.550" stroke="#ea4335"/><path d="M20.820 13.300 A18.900 18.900 0 0 1 46.570 26.260" stroke="#fbbc05"/><path d="M46.520 35.340 A18.900 18.900 0 0 1 20.910 48.140" stroke="#34a853"/><path d="M13 30.800 C19 30.800 22.500 35 26 38 C28.500 40.200 31.500 41 33.300 39 C35.500 36.500 34.500 33.800 31.500 32 C28 29.800 24.200 28.500 24.400 25.500 C24.600 22.500 27.500 21 30.300 22.200 C34.500 24 38 28.500 42 30 C44 30.800 46 30.800 49.200 30.800" stroke="#1a8fe3" stroke-width="4"/></g></svg>
<span class="t" style="left:984.50px;top:24.11px;font-size:17.9px;color:#e1d7b1;transform:scaleX(0.9775);">Accounts</span>
<svg class="r" style="left:1116px;top:24.5px;" width="12" height="12" viewBox="0 0 12 12"><path d="M1 1 L11 11 M11 1 L1 11" stroke="#e1d7b1" stroke-width="2" fill="none"/></svg>
<div class="r" style="left:1149.5px;top:18px;width:2.8px;height:23.5px;background:#4b4428;border-radius:1.400px;"></div>
<svg class="r" style="left:1167px;top:18px;" width="24" height="24" viewBox="0 0 24 24"><rect width="24" height="24" fill="#fff"/><g fill="none" transform="translate(-2.100 -3.350) scale(.5)" stroke-width="3.200"><path d="M18.050 14.760 A18.900 18.900 0 0 0 17.910 46.550" stroke="#ea4335"/><path d="M20.820 13.300 A18.900 18.900 0 0 1 46.570 26.260" stroke="#fbbc05"/><path d="M46.520 35.340 A18.900 18.900 0 0 1 20.910 48.140" stroke="#34a853"/><path d="M13 30.800 C19 30.800 22.500 35 26 38 C28.500 40.200 31.500 41 33.300 39 C35.500 36.500 34.500 33.800 31.500 32 C28 29.800 24.200 28.500 24.400 25.500 C24.600 22.500 27.500 21 30.300 22.200 C34.500 24 38 28.500 42 30 C44 30.800 46 30.800 49.200 30.800" stroke="#1a8fe3" stroke-width="4"/></g></svg>
<span class="t" style="left:1203.20px;top:24.11px;font-size:17.9px;color:#e1d7b1;transform:scaleX(0.9912);">Profile</span>
<svg class="r" style="left:1335px;top:24.5px;" width="12" height="12" viewBox="0 0 12 12"><path d="M1 1 L11 11 M11 1 L1 11" stroke="#e1d7b1" stroke-width="2" fill="none"/></svg>
<div class="r" style="left:1368.5px;top:18px;width:2.8px;height:23.5px;background:#4b4428;border-radius:1.400px;"></div>
<svg class="r" style="left:1386px;top:18px;" width="24" height="24" viewBox="0 0 24 24"><rect width="24" height="24" fill="#fff"/><g fill="none" transform="translate(-2.100 -3.350) scale(.5)" stroke-width="3.200"><path d="M18.050 14.760 A18.900 18.900 0 0 0 17.910 46.550" stroke="#ea4335"/><path d="M20.820 13.300 A18.900 18.900 0 0 1 46.570 26.260" stroke="#fbbc05"/><path d="M46.520 35.340 A18.900 18.900 0 0 1 20.910 48.140" stroke="#34a853"/><path d="M13 30.800 C19 30.800 22.500 35 26 38 C28.500 40.200 31.500 41 33.300 39 C35.500 36.500 34.500 33.800 31.500 32 C28 29.800 24.200 28.500 24.400 25.500 C24.600 22.500 27.500 21 30.300 22.200 C34.500 24 38 28.500 42 30 C44 30.800 46 30.800 49.200 30.800" stroke="#1a8fe3" stroke-width="4"/></g></svg>
<span class="t" style="left:1422.50px;top:24.11px;font-size:17.9px;color:#e1d7b1;transform:scaleX(0.9853);">Profile</span>
<svg class="r" style="left:1552.5px;top:24.5px;" width="12" height="12" viewBox="0 0 12 12"><path d="M1 1 L11 11 M11 1 L1 11" stroke="#e1d7b1" stroke-width="2" fill="none"/></svg>
<div class="r" style="left:1586.2px;top:18px;width:2.8px;height:23.5px;background:#4b4428;border-radius:1.400px;"></div>
<svg class="r" style="left:1605px;top:22.5px;" width="16" height="16" viewBox="0 0 16 16"><path d="M8 0.500 V15.500 M0.500 8 H15.500" stroke="#e1d7b1" stroke-width="2.400" fill="none"/></svg>
<div class="r" style="left:1740px;top:28px;width:15.5px;height:2px;background:#fff;"></div>
<svg class="r" style="left:1808px;top:21px;" width="17" height="17" viewBox="0 0 17 17"><rect x="1.500" y="4.500" width="10.500" height="10.500" rx="2.500" fill="none" stroke="#fff" stroke-width="2"/><path d="M5 1.500 H12.500 A3 3 0 0 1 15.500 4.500 V12" fill="none" stroke="#fff" stroke-width="2"/></svg>
<svg class="r" style="left:1877px;top:21px;" width="17" height="17" viewBox="0 0 17 17"><path d="M1.500 1.500 L15.500 15.500 M15.500 1.500 L1.500 15.500" stroke="#fff" stroke-width="2" fill="none"/></svg>
<svg class="r" style="left:22px;top:83px;" width="24" height="24" viewBox="0 0 24 24"><path d="M20.100 12 H4 M11.900 3.400 L3.300 12 L11.900 20.600" stroke="#e1d7b1" stroke-width="2.300" fill="none" /></svg>
<svg class="r" style="left:75px;top:83px;" width="24" height="24" viewBox="0 0 24 24"><path d="M3.300 12 H20 M12.100 3.400 L20.700 12 L12.100 20.600" stroke="#857c5e" stroke-width="2.300" fill="none" /></svg>
<svg class="r" style="left:129px;top:82px;" width="24" height="26" viewBox="0 0 24 26"><g stroke="#e1d7b1" stroke-width="2.400" fill="none"><path d="M19.800 14.100 A7.900 7.900 0 1 1 17.100 6.900"/><path d="M20.900 3.700 V10.500 H14.200"/></g></svg>
<div class="r" style="left:180px;top:69px;width:1479px;height:51px;background:#2a2411;border-radius:25.500px;"></div>
<div class="r" style="left:187.5px;top:76.5px;width:36px;height:36px;background:#3f381f;border-radius:18px;"></div>
<svg class="r" style="left:195px;top:84px;" width="22" height="22" viewBox="0 0 22 22"><g stroke="#efe8d0" stroke-width="1.900" fill="none"><circle cx="5.400" cy="5.750" r="2.600"/><path d="M11.600 5.750 H19"/><circle cx="16.500" cy="15.750" r="2.600"/><path d="M2.900 15.750 H10.600"/></g></svg>
<span class="t" style="left:236.00px;top:84.32px;font-size:21.2px;color:#f4edcf;transform:scaleX(0.9820);">signalmash.gventure.info</span>
<span class="t" style="left:467.50px;top:84.32px;font-size:21.2px;color:#c9c09c;transform:scaleX(1.0122);">/#/user/user-details</span>
<svg class="r" style="left:1563px;top:83.5px;" width="23" height="23" viewBox="0 0 23 23"><g stroke="#e1d7b1" stroke-width="2.200" fill="none"><circle cx="8.800" cy="8.800" r="6.600"/><path d="M13.800 13.800 L21 21" stroke-linecap="round"/><path d="M5.500 8.800 H12"/></g></svg>
<svg class="r" style="left:1610px;top:82.5px;" width="26" height="25" viewBox="0 0 26 25"><path d="M13 2.800 L15.900 9.700 L23.300 10.300 L17.700 15.200 L19.400 22.400 L13 18.500 L6.600 22.400 L8.300 15.200 L2.700 10.300 L10.100 9.700 Z" stroke="#e1d7b1" stroke-width="2.100" fill="none" stroke-linejoin="round"/></svg>
<svg class="r" style="left:1686px;top:79px;" width="28" height="28" viewBox="0 0 28 28"><path d="M5.900 6.400 H21 A2.600 2.600 0 0 1 23.600 9 V23 A2.600 2.600 0 0 1 21 25.600 H5.900 A2.600 2.600 0 0 1 3.300 23 V20 A4 4 0 0 0 3.300 12 V9 A2.600 2.600 0 0 1 5.900 6.400 Z" stroke="#e1d7b1" stroke-width="2.400" fill="none" stroke-linejoin="round"/><path d="M9.600 5.600 A3.400 3.400 0 0 1 16.400 5.600 Z M24.400 12.600 A3.400 3.400 0 0 1 24.400 19.400 Z" fill="#e1d7b1"/></svg>
<div class="r" style="left:1737px;top:83px;width:2.5px;height:23px;background:#5d5435;border-radius:1px;"></div>
<svg class="r" style="left:1767px;top:83px;" width="26" height="25" viewBox="0 0 26 25"><g stroke="#e1d7b1" stroke-width="2.500" fill="none"><path d="M13 1 V16 M6 9.500 L13 16.500 L20 9.500"/><path d="M2.300 17 V21.500 A1.500 1.500 0 0 0 3.800 23 H22.200 A1.500 1.500 0 0 0 23.700 21.500 V17"/></g></svg>
<div class="r" style="left:1818px;top:80px;width:30px;height:30px;background:#3f586f;border-radius:15px;"></div>
<span class="t" style="left:1829.30px;top:86.58px;font-size:15px;color:#fff;transform:scaleX(0.9600);">v</span>
<div class="r" style="left:1884.8px;top:84.8px;width:4.4px;height:4.4px;background:#e1d7b1;border-radius:50%;"></div>
<div class="r" style="left:1884.8px;top:92.8px;width:4.4px;height:4.4px;background:#e1d7b1;border-radius:50%;"></div>
<div class="r" style="left:1884.8px;top:100.8px;width:4.4px;height:4.4px;background:#e1d7b1;border-radius:50%;"></div>
<div class="r" style="left:0px;top:1008px;width:1920px;height:72px;background:#202020;"></div>
<div class="r" style="left:0px;top:1008px;width:1920px;height:1px;background:#464646;"></div>
<svg class="r" style="left:30px;top:1024px;" width="40" height="40" viewBox="0 0 40 40"><defs><linearGradient id="sun" x1="0" y1="0" x2="1" y2="1"><stop offset="0" stop-color="#f9c531"/><stop offset="1" stop-color="#f08a1c"/></linearGradient><linearGradient id="cl" x1="0" y1="0" x2="0" y2="1"><stop offset="0" stop-color="#8fb7ec"/><stop offset=".55" stop-color="#c9dcf6"/><stop offset="1" stop-color="#e6f0fd"/></linearGradient></defs><circle cx="17" cy="19" r="15" fill="url(#sun)"/><path d="M9 38 A6.500 6.500 0 0 1 9.500 25 A9 9 0 0 1 26 23.500 A7.300 7.300 0 0 1 28.500 38 Z" fill="url(#cl)"/></svg>
<div class="r" style="left:45.7px;top:1017.3px;width:23.4px;height:23.4px;background:#c42b1c;border-radius:50%;"></div>
<span class="t" style="left:49.20px;top:1022.57px;font-size:15.5px;color:#fff;transform:scaleX(0.9677);">9+</span>
<span class="t" style="left:76.70px;top:1023.87px;font-size:17.7px;color:#fff;transform:scaleX(0.9227);">34°C</span>
<span class="t" style="left:76.20px;top:1048.35px;font-size:17px;color:#d4d4d4;transform:scaleX(1.0365);">Partly sunny</span>
<svg class="r" style="left:477px;top:1027px;" width="35" height="35" viewBox="0 0 35 35"><defs><linearGradient id="wl" x1="0" y1="0" x2="1" y2="1"><stop offset="0" stop-color="#6ee0fd"/><stop offset="1" stop-color="#0b8fee"/></linearGradient></defs><g fill="url(#wl)"><rect x="0" y="0" width="16.700" height="16.700" rx="1"/><rect x="18.300" y="0" width="16.700" height="16.700" rx="1"/><rect x="0" y="18.300" width="16.700" height="16.700" rx="1"/><rect x="18.300" y="18.300" width="16.700" height="16.700" rx="1"/></g></svg>
<div class="r" style="left:534px;top:1022px;width:326px;height:44px;background:#f1f1f1;border-radius:22px;"></div>
<svg class="r" style="left:549px;top:1033px;" width="24" height="24" viewBox="0 0 24 24"><circle cx="9.800" cy="9.800" r="7.800" fill="none" stroke="#1f1f1f" stroke-width="2.300"/><path d="M15.600 15.600 L21.500 21.500" stroke="#1f1f1f" stroke-width="2.800" stroke-linecap="round"/></svg>
<span class="t" style="left:588.75px;top:1035.04px;font-size:20.5px;color:#5a5a5a;transform:scaleX(0.9233);">Search</span>
<svg class="r" style="left:792px;top:1029px;" width="54" height="32" viewBox="0 0 54 32"><rect x="2" y="0.500" width="50" height="27" rx="1.500" fill="#c9853a"/><rect x="4.500" y="3" width="45" height="22" fill="#1f7a5a"/><rect x="0" y="27.500" width="54" height="3.500" fill="#b5731f"/><path d="M10 6 V22 H33" stroke="#cfe6da" stroke-width="1" fill="none"/><path d="M12 20 C15 6 19 6 22 14 C25 22 28 22 31 10" stroke="#e6f3ec" stroke-width="1.300" fill="none"/><path d="M33 10 L37 7.500 L47 13 L44 16.500 Z" fill="#f2f2f2"/></svg>
<svg class="r" style="left:880px;top:1027px;" width="37" height="34" viewBox="0 0 37 34"><defs><linearGradient id="tv" x1="0" y1="0" x2="0" y2="1"><stop offset="0" stop-color="#ffffff"/><stop offset="1" stop-color="#b9b9b9"/></linearGradient></defs><rect x="0" y="9.500" width="27" height="24" rx="2.500" fill="#5b5b5b"/><rect x="9.500" y="0" width="27" height="24" rx="2.500" fill="url(#tv)"/><rect x="9.500" y="9.500" width="17.500" height="14.500" fill="#a9a9a9" opacity=".55"/></svg>
<svg class="r" style="left:946px;top:1028px;" width="36" height="32" viewBox="0 0 36 32"><defs><linearGradient id="cp1" x1="0" y1="0" x2="0" y2="1"><stop offset="0" stop-color="#1b8df2"/><stop offset=".5" stop-color="#43c08c"/><stop offset="1" stop-color="#f7d41c"/></linearGradient><linearGradient id="cp2" x1="0" y1="0" x2="0" y2="1"><stop offset="0" stop-color="#a95cf0"/><stop offset=".5" stop-color="#f0607c"/><stop offset="1" stop-color="#ffab55"/></linearGradient></defs><path d="M17 1 H23.500 C25.500 1 26.500 2.500 27 4.500 L28.500 9.500 H22 L16.500 1Z" fill="#1458d4"/><path d="M10.500 1 H20 C22.500 1 23.300 2.800 22.600 5 L18.200 19 C17.400 21.600 15.800 22.500 13.500 22.500 H5 C1.800 22.500 0.300 20 1.300 17 L5.200 5 C6.200 2.200 7.800 1 10.500 1 Z" fill="url(#cp1)"/><path d="M9 22.500 H16 L13.500 31 H12.500 C10.500 31 9.800 29.800 9.400 28 Z" fill="#f05a28"/><path d="M22.500 9.500 H31 C34.200 9.500 35.700 12 34.700 15 L30.800 27 C29.800 29.800 28.200 31 25.500 31 H15 C12.800 31 12.400 29.500 13 27.500 L17.600 12.800 C18.400 10.400 20 9.500 22.500 9.500 Z" fill="url(#cp2)"/><path d="M18.300 10.200 H22.300 L18.200 22.400 H14.200 Z" fill="#232323"/></svg>
<svg class="r" style="left:1012px;top:1028px;" width="37" height="33" viewBox="0 0 37 33"><defs><linearGradient id="fe" x1="0" y1="0" x2="0" y2="1"><stop offset="0" stop-color="#ffd968"/><stop offset="1" stop-color="#f8bd1e"/></linearGradient></defs><path d="M0 2.500 A2 2 0 0 1 2 0.500 H11.500 L14.500 3.800 H34.500 A1.800 1.800 0 0 1 36.300 5.600 V12 H0Z" fill="#e5a717"/><path d="M0 7 L13 7 L15.500 4.300 H34.500 A1.800 1.800 0 0 1 36.300 6 V31 A1.600 1.600 0 0 1 34.700 32.600 H1.600 A1.600 1.600 0 0 1 0 31 Z" fill="url(#fe)"/><path d="M6.200 32.600 V25.500 A3.400 3.400 0 0 1 9.600 22.100 H26.500 A3.400 3.400 0 0 1 29.900 25.500 V32.600 Z" fill="#1684da"/><rect x="11" y="26.600" width="14" height="1.800" rx=".9" fill="#0f5ea6"/></svg>
<svg class="r" style="left:1077px;top:1026px;" width="38" height="37" viewBox="0 0 38 37"><defs><linearGradient id="tb" x1="0" y1="0" x2="0" y2="1"><stop offset="0" stop-color="#1a6fdc"/><stop offset="1" stop-color="#2292ea"/></linearGradient><linearGradient id="tbe" x1="0" y1="0" x2="0" y2="1"><stop offset="0" stop-color="#ffffff"/><stop offset="1" stop-color="#b8d8f6"/></linearGradient></defs><path d="M14.500 7 C17 2 24 -0.500 30 2 C32.500 3 34.500 4.500 35 6 C34 6 33.500 6.500 33.800 7.500 C36.500 11.500 37.800 16.500 37 21.500 C35.500 30 28.500 36.500 19.500 36.300 C10 36 2.500 29.500 1.200 21 C0.600 17 1.300 13 3.500 9.500 C3.800 12 4.200 13.500 5 15 C5.500 11 7 7 9 5 C9.600 8 10.500 10 12 11.500 C12.500 9.800 13.300 8.300 14.500 7 Z" fill="url(#tb)"/><path d="M14.500 7 C17 2 24 -0.500 30 2 C32.500 3 34.500 4.500 35 6 C30 4.500 24 5.500 20 9 C17.500 11.200 16 14 15.800 17 C14 14 13.500 10 14.500 7Z" fill="#1552c0"/><path d="M5 15 C4.500 22 8 29 15 32 C21 34.500 28 33 32 28 C27 31 20 31 15 27.500 C10.500 24.500 8.800 20 9.500 15.500 C8 16.500 6.500 16.500 5 15Z" fill="#1659c8"/><ellipse cx="19.500" cy="18.800" rx="9.300" ry="7.600" fill="url(#tbe)"/><path d="M10.800 16.500 L19.500 23 L28.200 16.500" stroke="#a9c8ec" stroke-width="1.500" fill="none"/><circle cx="20.500" cy="5.600" r="1" fill="#e8f2ff"/></svg>
<div class="r" style="left:1132px;top:1014px;width:60px;height:60px;background:#2e2e2e;border-radius:7px;border:1px solid #383838;box-sizing:border-box;"></div>
<svg class="r" style="left:1143.5px;top:1025.5px;" width="37" height="37" viewBox="0 0 37 37"><defs><linearGradient id="cr" x1="0" y1="0" x2="0" y2="1"><stop offset="0" stop-color="#ea4335"/><stop offset="1" stop-color="#d93025"/></linearGradient><linearGradient id="cg" x1="0" y1="0" x2="1" y2="1"><stop offset="0" stop-color="#2da94f"/><stop offset="1" stop-color="#1e8e3e"/></linearGradient><linearGradient id="cy" x1="1" y1="0" x2="0" y2="1"><stop offset="0" stop-color="#fcc934"/><stop offset="1" stop-color="#fbbc04"/></linearGradient></defs><path d="M2.910 9.500 A18 18 0 0 1 34.090 9.500 L18.500 9.500 A9 9 0 0 0 10.710 23 Z" fill="url(#cr)"/><path d="M18.500 36.500 A18 18 0 0 1 2.910 9.500 L10.710 23 A9 9 0 0 0 26.290 23 Z" fill="url(#cg)"/><path d="M34.090 9.500 A18 18 0 0 1 18.500 36.500 L26.290 23 A9 9 0 0 0 18.500 9.500 Z" fill="url(#cy)"/><circle cx="18.500" cy="18.500" r="9.100" fill="#fff"/><circle cx="18.500" cy="18.500" r="7.300" fill="#2a74e8"/></svg>
<div class="r" style="left:1150px;top:1068px;width:24px;height:5px;background:#4cc2ff;border-radius:2.500px;"></div>
<svg class="r" style="left:1209px;top:1027px;" width="40" height="34" viewBox="0 0 40 34"><circle cx="25" cy="8.500" r="6" fill="#7b83eb"/><rect x="14" y="12" width="22" height="19" rx="5" fill="#5059c9"/><circle cx="19" cy="24" r="9" fill="#7b83eb"/><rect x="1" y="7.500" width="18" height="18" rx="2" fill="#4b53bc"/><path d="M5.500 11.500 H14.500 V13.700 H11.200 V21.500 H8.800 V13.700 H5.500 Z" fill="#fff"/></svg>
<div class="r" style="left:1228.5px;top:1017.5px;width:27.5px;height:27.5px;background:#4cc2ff;border-radius:50%;"></div>
<span class="t" style="left:1235.60px;top:1023.62px;font-size:16.3px;color:#0b0b0b;transform:scaleX(0.7517);-webkit-text-stroke:.25px #0b0b0b;">51</span>
<div class="r" style="left:1223.75px;top:1068.3px;width:9.25px;height:4.5px;background:#9a9a9a;border-radius:2.300px;"></div>
<svg class="r" style="left:1280px;top:1026px;" width="29" height="37" viewBox="0 0 29 37"><rect x="0.500" y="3" width="28" height="30" rx="2" fill="#35b4dd"/><rect x="0.500" y="3" width="28" height="30" rx="2" fill="url(#np)"/><defs><linearGradient id="np" x1="0" y1="0" x2="0" y2="1"><stop offset="0" stop-color="#86d8f2"/><stop offset="1" stop-color="#36a9d4"/></linearGradient></defs><rect x="0.500" y="30" width="28" height="3" fill="#eadfce"/><rect x="0.500" y="32.500" width="28" height="3" rx="1" fill="#c1601f"/><g fill="#0f6f99"><circle cx="5" cy="3" r="1.700"/><circle cx="11.300" cy="3" r="1.700"/><circle cx="17.700" cy="3" r="1.700"/><circle cx="24" cy="3" r="1.700"/></g><g stroke="#0d7aa6" stroke-width="1.700"><path d="M5.500 12.500 H23.500 M5.500 18 H23.500 M5.500 23.500 H23.500"/></g></svg>
<div class="r" style="left:1290px;top:1068.3px;width:9.299999999999955px;height:4.5px;background:#9a9a9a;border-radius:2.300px;"></div>
<svg class="r" style="left:1343.5px;top:1028px;" width="34" height="32" viewBox="0 0 34 32"><rect x="14" y="3.500" width="19" height="25" rx="1.500" fill="#21a366"/><rect x="16.500" y="6" width="14.500" height="20" fill="#e9f6ee"/><g stroke="#21a366" stroke-width="1.200"><path d="M16.500 10 H31 M16.500 14 H31 M16.500 18 H31 M16.500 22 H31 M22 6 V26 M26.500 6 V26"/></g><path d="M0 3.800 L20 0 V32 L0 28.200 Z" fill="#107c41"/><path d="M5.200 9.500 H8.400 L10.300 13.700 L12.300 9.500 H15.300 L11.900 16 L15.400 22.500 H12.200 L10.200 18.200 L8.100 22.500 H5 L8.600 16 Z" fill="#fff"/></svg>
<div class="r" style="left:1355.75px;top:1068.3px;width:9.25px;height:4.5px;background:#9a9a9a;border-radius:2.300px;"></div>
<svg class="r" style="left:1407.5px;top:1025px;" width="37" height="37" viewBox="0 0 37 37"><defs><linearGradient id="pc" x1="0" y1=".85" x2="1" y2="0"><stop offset="0" stop-color="#07c3f2"/><stop offset=".5" stop-color="#0cc1e6"/><stop offset=".74" stop-color="#21d789"/><stop offset="1" stop-color="#fcf84a"/></linearGradient></defs><path d="M12 0.500 H34.500 A2 2 0 0 1 36.500 2.500 V23.500 L24.500 36.800 H0.500 V12.700 Z" fill="url(#pc)"/><rect x="7.500" y="8" width="22" height="21.700" fill="#060606"/><path d="M10 10.500 H14.500 A2.900 2.900 0 0 1 14.500 16.300 H12 V19 H10 Z M12 12.300 V14.600 H14.200 A1.100 1.100 0 0 0 14.200 12.300Z" fill="#fff"/><path d="M26 12.500 A4.300 4.300 0 1 0 26 17" stroke="#fff" stroke-width="2" fill="none"/><rect x="10" y="24.500" width="8.500" height="1.800" fill="#fff"/></svg>
<div class="r" style="left:1421.6px;top:1068.3px;width:9.600000000000136px;height:4.5px;background:#9a9a9a;border-radius:2.300px;"></div>
<svg class="r" style="left:1604px;top:1038px;" width="19" height="12" viewBox="0 0 19 12"><path d="M1.800 10 L9.500 2.300 L17.200 10" stroke="#fff" stroke-width="2" fill="none"/></svg>
<svg class="r" style="left:1651.5px;top:1032px;" width="19" height="24" viewBox="0 0 19 24"><g stroke="#86d8f7" stroke-width="1.900" fill="none"><rect x="5.600" y="1" width="7.800" height="14" rx="3.900"/><path d="M1.500 11 A8 8 0 0 0 17.500 11 M9.500 19 V23.500"/></g></svg>
<svg class="r" style="left:1696.5px;top:1033.5px;" width="25" height="19" viewBox="0 0 25 19"><g stroke="#fff" stroke-width="1.900" fill="none" stroke-linecap="round"><path d="M2.300 6.700 A14.500 14.500 0 0 1 22.900 6.700"/><path d="M5.700 10 A9.700 9.700 0 0 1 19.500 10"/><path d="M9 13.200 A5.100 5.100 0 0 1 16.200 13.200"/></g><circle cx="12.600" cy="16.600" r="2" fill="#fff"/></svg>
<svg class="r" style="left:1732.5px;top:1033.5px;" width="26" height="20" viewBox="0 0 26 20"><g stroke="#fff" stroke-width="1.700" fill="none" stroke-linejoin="round" stroke-linecap="round"><path d="M1 7 H5 L10.500 2 V18 L5 13 H1 Z"/><path d="M14 6.500 A5 5 0 0 1 14 13.500"/><path d="M17 3.500 A9 9 0 0 1 17 16.500"/><path d="M20 1 A12.500 12.500 0 0 1 20 19"/></g></svg>
<svg class="r" style="left:1768.5px;top:1036.5px;" width="26" height="15" viewBox="0 0 26 15"><rect x="1" y="1" width="21" height="13" rx="3.300" fill="none" stroke="#fff" stroke-width="1.800"/><rect x="3.700" y="3.700" width="7" height="7.600" rx="1" fill="#fff"/><rect x="22.800" y="4.800" width="2.400" height="5.400" rx="1.200" fill="#fff"/></svg>
<span class="t" style="left:1827.10px;top:1024.06px;font-size:17.6px;color:#fff;transform:scaleX(0.9777);">4:59 PM</span>
<span class="t" style="left:1818.70px;top:1048.06px;font-size:17.6px;color:#fff;transform:scaleX(1.0576);">9/5/2025</span>
</div></body></html>
